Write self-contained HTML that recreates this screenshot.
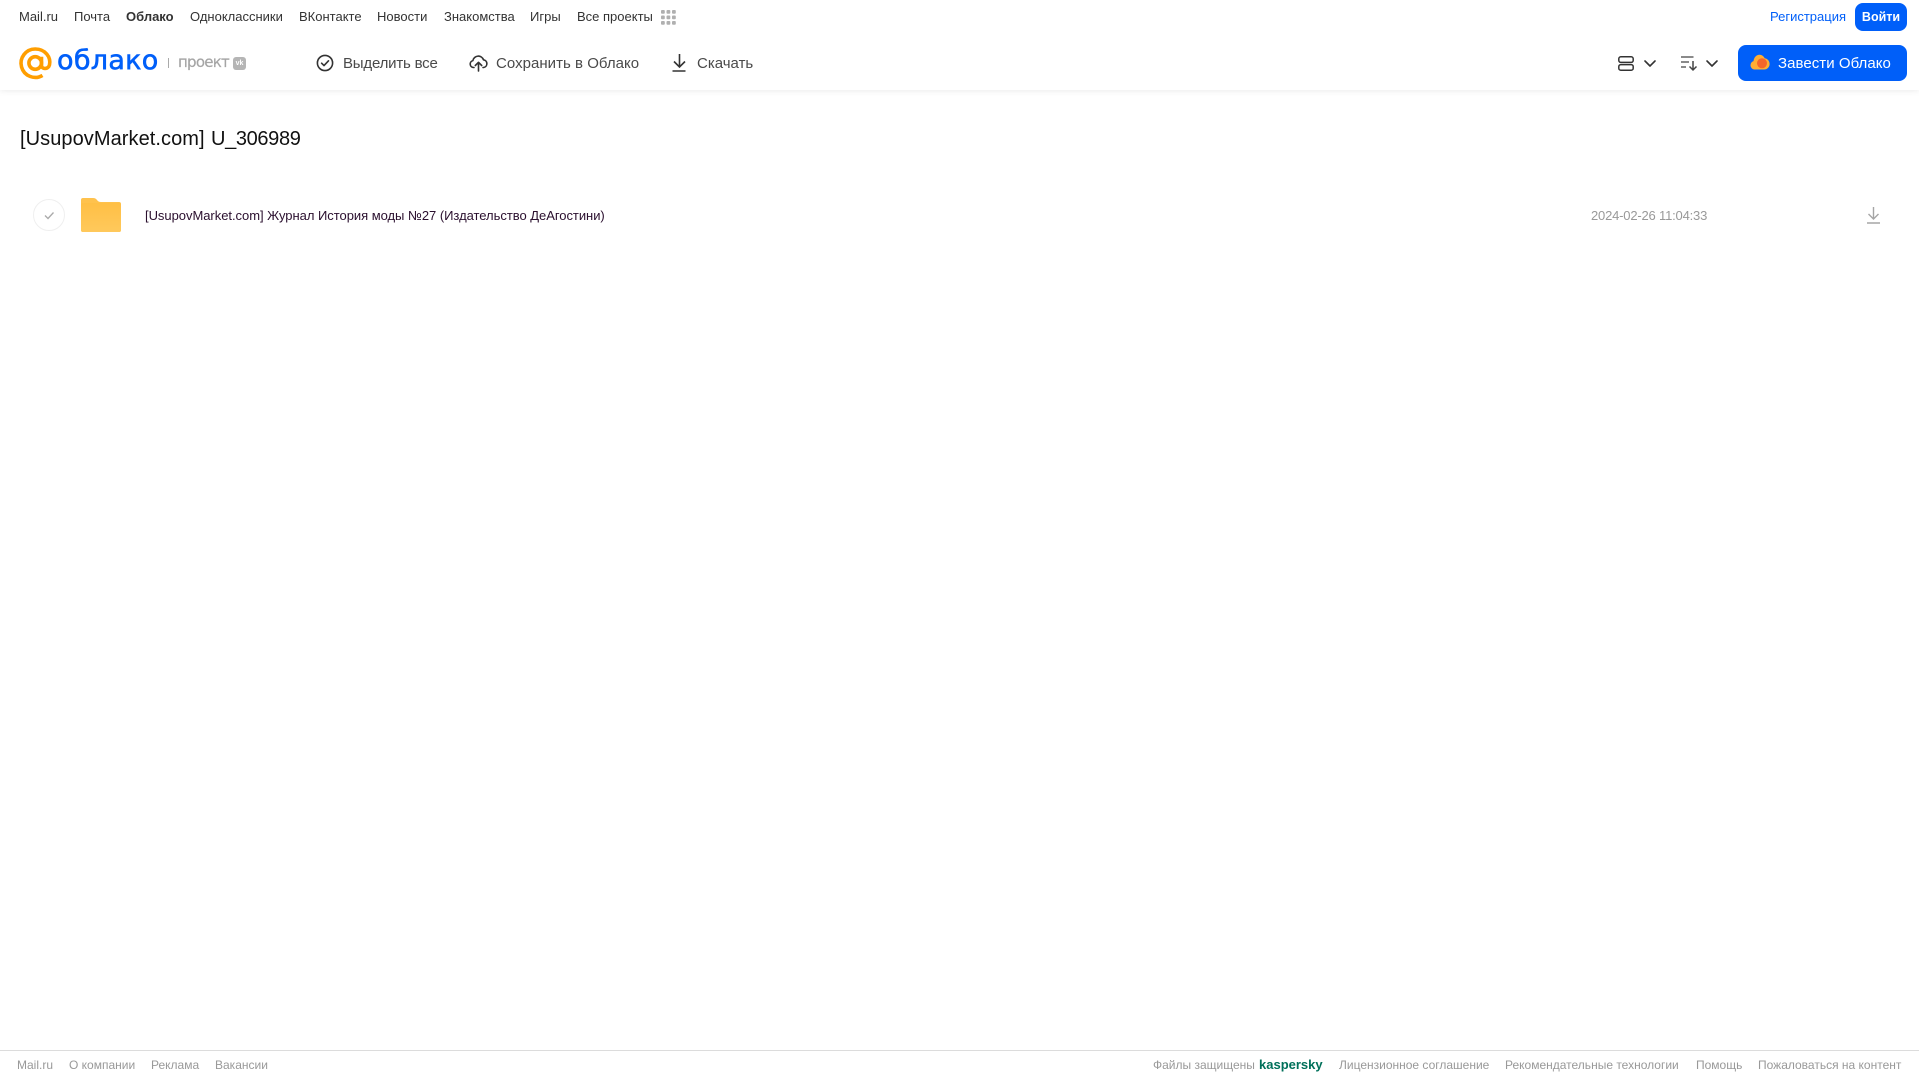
<!DOCTYPE html>
<html lang="ru"><head><meta charset="utf-8"><title>Облако Mail.ru</title>
<style>
html,body{margin:0;padding:0;width:1919px;height:1079px;overflow:hidden;background:#fff;font-family:"Liberation Sans",Arial,sans-serif;color:#2c2d2e}
.t{position:absolute;white-space:nowrap;line-height:20px;text-decoration:none}
.n{top:7px;font-size:13px;color:#333}
.a{top:54px;font-size:15px;line-height:20px;color:#4a4a4a}
.f{top:1055px;font-size:12px;color:#999}
svg{position:absolute;overflow:visible}
#hd{position:absolute;left:0;top:0;width:1919px;height:90px;background:#fff;box-shadow:0 1px 6px rgba(0,0,0,.08)}
</style></head><body>
<div id="hd"></div>
<a class="t n" style="left:19px">Mail.ru</a>
<a class="t n" style="left:74px">Почта</a>
<a class="t n" style="left:126px;font-weight:bold">Облако</a>
<a class="t n" style="left:190px">Одноклассники</a>
<a class="t n" style="left:299px">ВКонтакте</a>
<a class="t n" style="left:377px">Новости</a>
<a class="t n" style="left:444px">Знакомства</a>
<a class="t n" style="left:530px">Игры</a>
<a class="t n" style="left:577px">Все проекты</a>
<svg style="left:661px;top:10px" width="15" height="15" fill="#b0b0b0"><rect x="0" y="0" width="3.800" height="3.800" rx="1"/><rect x="5.500" y="0" width="3.800" height="3.800" rx="1"/><rect x="11" y="0" width="3.800" height="3.800" rx="1"/><rect x="0" y="5.500" width="3.800" height="3.800" rx="1"/><rect x="5.500" y="5.500" width="3.800" height="3.800" rx="1"/><rect x="11" y="5.500" width="3.800" height="3.800" rx="1"/><rect x="0" y="11" width="3.800" height="3.800" rx="1"/><rect x="5.500" y="11" width="3.800" height="3.800" rx="1"/><rect x="11" y="11" width="3.800" height="3.800" rx="1"/></svg>
<a class="t n" style="left:1770px;color:#005ff9">Регистрация</a>
<a class="t" style="left:1855px;top:3px;width:52px;height:28px;border-radius:8px;background:#005ff9;color:#fff;font-size:12.500px;line-height:28px;text-align:center;font-weight:bold">Войти</a>

<svg style="left:19px;top:47px" width="33" height="33" viewBox="0 0 33 33" fill="none" stroke="#ff9e00" stroke-width="3.600"><circle cx="16.200" cy="16" r="6.300"/><path d="M22.500 9.800v8.600c0 4.200 6.900 4.200 8-.6 1.600-7.500-4-15.800-14.300-15.800a14.200 14.200 0 1 0 7.300 26.400"/></svg>
<span class="t" style="left:57px;top:45px;font:27px/32px 'DejaVu Sans',sans-serif;color:#005ff9;-webkit-text-stroke:.6px #005ff9;letter-spacing:.3px">облако</span>
<div style="position:absolute;left:168px;top:58px;width:1px;height:10px;background:#aaa"></div>
<span class="t" style="left:178px;top:52px;font:15px/20px 'DejaVu Sans',sans-serif;color:#a5a5a5;-webkit-text-stroke:.2px #a5a5a5;letter-spacing:-.75px">проект</span>
<div style="position:absolute;left:233px;top:57px;width:13px;height:13px;border-radius:3px;background:#b5b5b5"></div>
<span class="t" style="left:234px;top:58px;font:bold 7px/11px 'Liberation Sans',sans-serif;color:#fff;width:11px;text-align:center">vk</span>

<svg style="left:316px;top:54px" width="18" height="18" fill="none" stroke="#333" stroke-width="1.600"><circle cx="9" cy="9" r="7.600"/><path d="M5.600 9.200l2.400 2.400 4.500-4.800" stroke-linecap="round" stroke-linejoin="round"/></svg>
<span class="t a" style="left:343px;letter-spacing:-.2px">Выделить все</span>
<svg style="left:469px;top:54px" width="19" height="18" fill="none" stroke="#333" stroke-width="1.600" stroke-linecap="round" stroke-linejoin="round"><path d="M5 13.500H4.500a3.500 3.500 0 0 1-.6-6.900A5.500 5.500 0 0 1 14.500 5.800a3.900 3.900 0 0 1 .2 7.700H14"/><path d="M9.500 17V8.500M6.300 11.500l3.200-3.200 3.200 3.200"/></svg>
<span class="t a" style="left:496px;letter-spacing:.03px">Сохранить в Облако</span>
<svg style="left:672px;top:54px" width="15" height="18" fill="none" stroke="#333" stroke-width="1.600"><path d="M7.500 0v12.500M2 7.500l5.500 5.500 5.500-5.500M.5 17h13"/></svg>
<span class="t a" style="left:697px">Скачать</span>

<svg style="left:1618px;top:56px" width="16" height="15" fill="none" stroke="#333" stroke-width="1.500"><rect x=".8" y=".8" width="14.400" height="5.600" rx="2"/><rect x=".8" y="8.600" width="14.400" height="5.600" rx="2"/></svg>
<svg style="left:1644px;top:60px" width="12" height="7" fill="none" stroke="#333" stroke-width="1.600" stroke-linecap="round" stroke-linejoin="round"><path d="M1 1l5 5 5-5"/></svg>
<svg style="left:1681px;top:56px" width="17" height="15" fill="none" stroke="#444" stroke-width="1.300"><path d="M0 1h12.500M0 6h8M0 11h5"/><path d="M12 5v9M8.500 10.500l3.500 3.500 3.500-3.500" stroke-width="1.500"/></svg>
<svg style="left:1706px;top:60px" width="12" height="7" fill="none" stroke="#333" stroke-width="1.600" stroke-linecap="round" stroke-linejoin="round"><path d="M1 1l5 5 5-5"/></svg>
<div style="position:absolute;left:1738px;top:45px;width:169px;height:36px;border-radius:8px;background:#005ff9"></div>
<svg style="left:1750px;top:54px" width="20" height="16"><path d="M4.500 15.500a4.300 4.300 0 0 1-1-8.400C4 3 6.800.5 9.800.8c2.200.2 4 1.500 4.800 3.500 3 .4 5 2.800 5 5.700 0 3-2.300 5.500-5.300 5.500z" fill="#ffae33"/><circle cx="12" cy="9.300" r="5" fill="#f4662b"/></svg>
<span class="t" style="left:1778px;top:54px;font-size:15px;color:#fff;letter-spacing:.05px">Завести Облако</span>

<span class="t" style="left:20px;top:127px;font-size:20px;line-height:24px;color:#111;letter-spacing:.07px">[UsupovMarket.com]</span>
<span class="t" style="left:211px;top:127px;font-size:20px;line-height:24px;color:#111;letter-spacing:-.35px">U_306989</span>

<svg style="left:33px;top:199px" width="32" height="32" fill="none"><circle cx="16" cy="16" r="15.500" stroke="#efefef"/><path d="M12 16.500l3 3 5.500-6" stroke="#aaa" stroke-width="1.300"/></svg>
<svg style="left:81px;top:198px" width="40" height="34"><defs><linearGradient id="g" x1="0" y1="0" x2="0" y2="1"><stop offset="0" stop-color="#ffbf45"/><stop offset="1" stop-color="#ffc95c"/></linearGradient></defs><path d="M0 2a2 2 0 0 1 2-2h10c2 0 3 .7 4 2s2 2 4 2h18a2 2 0 0 1 2 2v26a2 2 0 0 1-2 2H2a2 2 0 0 1-2-2z" fill="#ffc24d"/><path d="M0 7a2 2 0 0 1 2-2h36a2 2 0 0 1 2 2v25a2 2 0 0 1-2 2H2a2 2 0 0 1-2-2z" fill="url(#g)"/></svg>
<a class="t" style="left:145px;top:206px;font-size:13px;color:#2a0f2e;letter-spacing:-.035px">[UsupovMarket.com] Журнал История моды №27 (Издательство ДеАгостини)</a>
<span class="t" style="left:1591px;top:206px;font-size:13px;color:#999;letter-spacing:-.19px">2024-02-26 11:04:33</span>
<svg style="left:1867px;top:207px" width="13" height="17" fill="none" stroke="#a5a5a5" stroke-width="1.400"><path d="M6.500 0v12M1.500 7l5 5 5-5M0 16h13"/></svg>

<div style="position:absolute;left:0;top:1050px;width:1919px;height:1px;background:#dcdcdc"></div>
<a class="t f" style="left:17px">Mail.ru</a>
<a class="t f" style="left:69px">О компании</a>
<a class="t f" style="left:151px">Реклама</a>
<a class="t f" style="left:215px">Вакансии</a>
<span class="t f" style="left:1153px">Файлы защищены</span>
<span class="t f" style="left:1259px;color:#00705a;font-weight:bold;font-size:13px">kaspersky</span>
<a class="t f" style="left:1339px">Лицензионное соглашение</a>
<a class="t f" style="left:1505px">Рекомендательные технологии</a>
<a class="t f" style="left:1696px">Помощь</a>
<a class="t f" style="left:1758px">Пожаловаться на контент</a>
</body></html>
